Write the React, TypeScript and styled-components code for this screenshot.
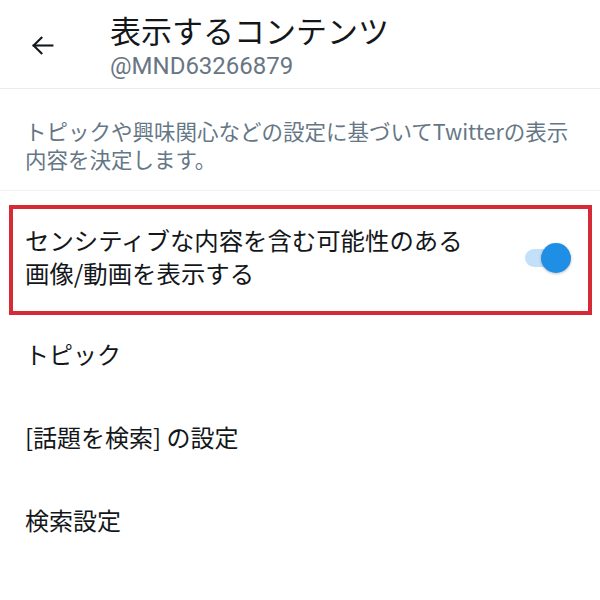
import styled, { createGlobalStyle } from 'styled-components';

const GlobalStyle = createGlobalStyle`
	body {
		margin: 0;
		background: #fff;
		font-family: "Noto Sans CJK JP", Roboto, "Noto Sans", sans-serif;
		color: #14171a;
	}
`;

const Page = styled.div`
	width: 600px;
	height: 600px;
	background: #fff;
	overflow: hidden;
`;

const Header = styled.header`
	display: flex;
	align-items: flex-start;
	height: 89px;
	border-bottom: 1px solid #e9ebed;
	box-sizing: border-box;
`;

const BackButton = styled.div`
	width: 80px;
	padding: 33px 0 0 30px;
	box-sizing: border-box;
	color: #14171a;
	svg { display: block; }
`;

const TitleBlock = styled.div`
	display: flex;
	flex-direction: column;
	padding-top: 9px;
	margin-left: 30px;
`;

const Title = styled.div`
	font-size: 31px;
	line-height: 42px;
	color: #14171a;
`;

const Handle = styled.div`
	font-family: Roboto, "Noto Sans", sans-serif;
	font-size: 24px;
	line-height: 30px;
	color: #687684;
`;

const Description = styled.p`
	margin: 0;
	padding: 28px 25px 17px;
	font-size: 21.5px;
	line-height: 28px;
	color: #657786;
	border-bottom: 1px solid #eef0f2;
`;

const Highlight = styled.div`
	display: flex;
	align-items: center;
	justify-content: space-between;
	margin: 14px 8px 0 9px;
	padding: 14px 23px 22px 12px;
	border: 4px solid #d62b36;
`;

const OptionLabel = styled.div`
	font-size: 24.4px;
	line-height: 33px;
	color: #14171a;
`;

const Track = styled.div<{ $on: boolean }>`
	position: relative;
	width: 40px;
	height: 18px;
	margin-top: 4px;
	border-radius: 9px;
	background: ${p => (p.$on ? '#c4e0f8' : '#d0d5d9')};
`;

const Knob = styled.div<{ $on: boolean }>`
	position: absolute;
	top: -6px;
	left: ${p => (p.$on ? '16px' : '-4px')};
	width: 30px;
	height: 30px;
	border-radius: 50%;
	background: ${p => (p.$on ? '#1f8fe5' : '#fff')};
	box-shadow: 0 1px 3px rgba(0, 0, 0, 0.25);
`;

const Menu = styled.div`
	display: flex;
	flex-direction: column;
`;

const MenuRow = styled.div`
	height: 83px;
	padding: 22px 25px 0;
	box-sizing: border-box;
	font-size: 24px;
	line-height: 33px;
	color: #14171a;
`;

const menuItems: string[] = ['トピック', '[話題を検索] の設定', '検索設定'];

const BackArrow = () => (
	<svg width="25" height="25" viewBox="0 0 24 24" fill="none" stroke="currentColor" strokeWidth="2" strokeLinecap="square">
		<path d="M21.5 12H3.5" />
		<path d="M11 4.5L3.5 12l7.5 7.5" />
	</svg>
);

export default function App() {
	return (
		<Page>
			<GlobalStyle />
			<Header>
				<BackButton><BackArrow /></BackButton>
				<TitleBlock>
					<Title>表示するコンテンツ</Title>
					<Handle>@MND63266879</Handle>
				</TitleBlock>
			</Header>
			<Description>
				トピックや興味関心などの設定に基づいてTwitterの表示内容を決定します。
			</Description>
			<Highlight>
				<OptionLabel>
					センシティブな内容を含む可能性のある<br />画像/動画を表示する
				</OptionLabel>
				<Track $on>
					<Knob $on />
				</Track>
			</Highlight>
			<Menu>
				{menuItems.map(item => (
					<MenuRow key={item}>{item}</MenuRow>
				))}
			</Menu>
		</Page>
	);
}
